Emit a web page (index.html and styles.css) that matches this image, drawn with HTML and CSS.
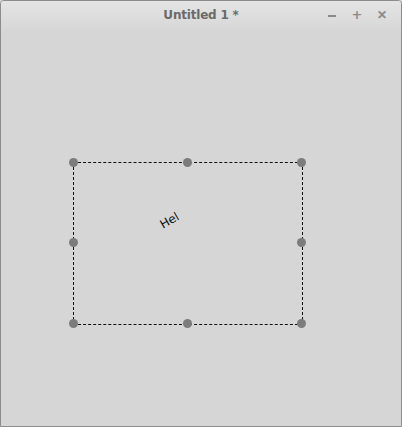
FILE: index.html
```html
<!DOCTYPE html>
<html lang="en">
<head>
	<meta charset="utf-8" />
	<title>Untitled 1 *</title>
	<link rel="stylesheet" href="styles.css">
</head>
<body>
	<div class="window">
		<div class="titleBar">
			<span class="title">Untitled 1 *</span>
			<div class="buttons">
				<span class="btn btnMin"></span>
				<span class="btn">+</span>
				<span class="btn btnClose">&#10005;</span>
			</div>
		</div>

		<div class="canvas">
			<div class="selection">
				<span class="handle h-tl"></span>
				<span class="handle h-tc"></span>
				<span class="handle h-tr"></span>
				<span class="handle h-ml"></span>
				<span class="handle h-mr"></span>
				<span class="handle h-bl"></span>
				<span class="handle h-bc"></span>
				<span class="handle h-br"></span>

				<div class="textClip"><span class="shapeText">Hello</span></div>
			</div>
		</div>
	</div>
</body>
</html>
```

FILE: styles.css
```css
html, body{
	margin: 0;
	padding: 0;
	background: #d6d6d6;
}

.window{
	box-sizing: border-box;
	width: 402px;
	height: 427px;
	border: 1px solid #8c8c8c;
	border-radius: 4px 4px 0 0;
	background: #d6d6d6;
	display: flex;
	flex-direction: column;
	overflow: hidden;
}

.titleBar{
	height: 28px;
	flex: none;
	position: relative;
	display: flex;
	align-items: center;
	justify-content: center;
	background: linear-gradient(#e4e4e4, #d8d8d8);
	font-family: "DejaVu Sans", sans-serif;
}

.title{
	font-weight: bold;
	font-size: 12px;
	color: #6a6a6a;
	letter-spacing: -0.2px;
}

.buttons{
	position: absolute;
	right: 12px;
	top: 0;
	height: 28px;
	display: flex;
	align-items: center;
	gap: 11px;
}

.btn{
	width: 14px;
	height: 14px;
	line-height: 14px;
	text-align: center;
	font-weight: bold;
	font-size: 13px;
	color: #8a8a8a;
	position: relative;
}

.btnClose{
	font-size: 12px;
	-webkit-text-stroke: 0.6px #8a8a8a;
}

.btnMin::after{
	content: "";
	position: absolute;
	left: 3px;
	top: 7px;
	width: 8px;
	height: 2px;
	background: #8a8a8a;
}

.canvas{
	flex: 1;
	position: relative;
}

.selection{
	position: absolute;
	left: 72px;
	top: 133px;
	width: 228px;
	height: 161px;
	border: 1px dashed #111;
}

.handle{
	position: absolute;
	width: 9px;
	height: 9px;
	border-radius: 50%;
	background: #7c7c7c;
	margin: -5px 0 0 -5px;
}

.h-tl{ left: 0; top: 0; }
.h-tc{ left: 114px; top: 0; }
.h-tr{ left: 228px; top: 0; }
.h-ml{ left: 0; top: 80px; }
.h-mr{ left: 228px; top: 80px; }
.h-bl{ left: 0; top: 161px; }
.h-bc{ left: 114px; top: 161px; }
.h-br{ left: 228px; top: 161px; }

.textClip{
	position: absolute;
	left: 89px;
	top: 52px;
	width: 19px;
	height: 14px;
	overflow: hidden;
	transform: rotate(-30deg);
	transform-origin: left bottom;
}

.shapeText{
	font-family: "DejaVu Sans", sans-serif;
	font-size: 12px;
	line-height: 14px;
	color: #111;
}
```
